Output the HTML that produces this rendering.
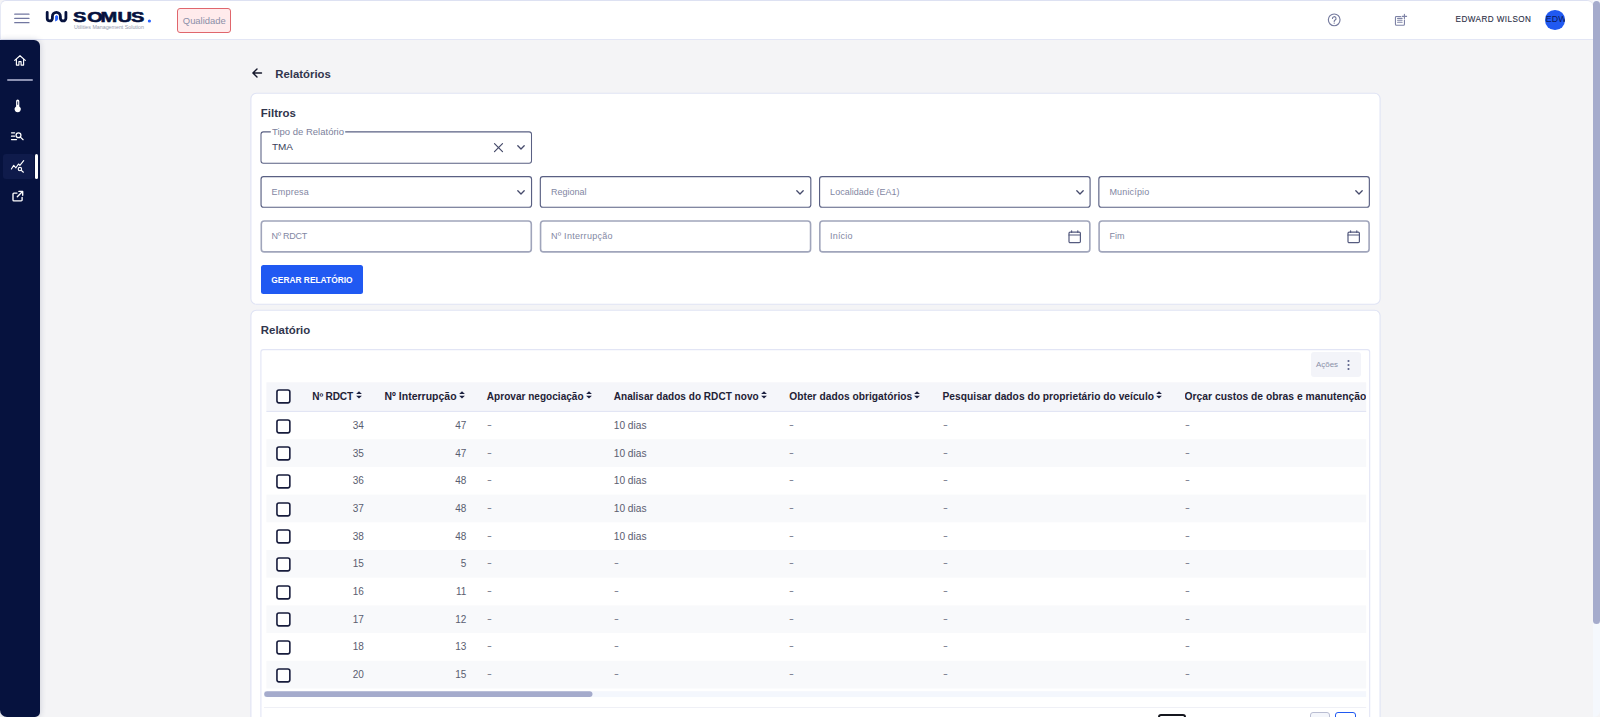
<!DOCTYPE html><html lang="pt-BR"><head><meta charset="utf-8"><title>Relatórios</title><style>
*{box-sizing:border-box}
html,body{margin:0;padding:0}
body{width:1600px;height:717px;overflow:hidden;background:#f4f4f6;font-family:"Liberation Sans",sans-serif;color:#2a2f4a;position:relative}
.abs{position:absolute}
.t{position:absolute;white-space:nowrap;line-height:1;transform:translateY(-50%)}
#hdr{position:absolute;left:0;top:0;width:1593px;height:40px;background:#fff;border-top:1px solid #dde1f2;border-bottom:1px solid #e3e6f5;border-left:1px solid #e6e9f5;border-radius:6px 6px 0 0}
#side{position:absolute;left:0;top:40px;width:40px;height:677px;background:#06123e;border-radius:0 6px 5px 7px;box-shadow:0 0 6px rgba(30,40,90,.2)}
#sbtrack{position:absolute;left:1593px;top:0;width:7px;height:717px;background:#f5f8fd;border-radius:0 4px 6px 0}
#sbthumb{position:absolute;left:1593.4px;top:1px;width:6.3px;height:623px;background:#a5abcc;border-radius:3.5px}
.card{position:absolute;background:#fff;border:1px solid #e1e5f5;border-radius:6px}
.fld{position:absolute;height:32px;background:#fff;border-radius:2.5px;border:1px solid #555b7f}
.fld.inp{border:2px solid #a6abc3;border-radius:3px}
.ph{color:#8287a3;font-size:9px;letter-spacing:.12px}
.hd{font-weight:700;font-size:10px;color:#1f2236;letter-spacing:.02px}
.cell{font-size:10px;color:#5a5d70}
.dash{transform:translateY(-50%) translateY(-.7px) scaleX(1.45);transform-origin:0 50%;color:#7b7e8f}
.cb{position:absolute;width:15px;height:15px;border:1.7px solid #171c3c;border-radius:2.5px;background:#fff}
.row{position:absolute;left:266px;width:1100.3px}
.row.alt{background:#f8f9fb}
svg{position:absolute;overflow:visible}
</style></head><body>
<div id="hdr"></div>
<svg style="left:13.5px;top:12px" width="16" height="14" viewBox="0 0 16 14"><g stroke="#7277a0" stroke-width="1.4" stroke-linecap="round"><line x1="0.8" y1="2.15" x2="14.9" y2="2.15"/><line x1="0.8" y1="6.4" x2="14.9" y2="6.4"/><line x1="0.8" y1="10.65" x2="14.9" y2="10.65"/></g></svg>
<svg style="left:40px;top:5px" width="120" height="30" viewBox="40 5 120 30">
<path d="M47.2 12.3V18.3a2.6 2.6 0 0 0 5.2 0V16.4a4 4 0 0 1 8 0V18.2a2.75 2.75 0 0 0 5.5 0V12.3" fill="none" stroke="#06123e" stroke-width="2.8" stroke-linecap="round" stroke-linejoin="round"/>
<path d="M55.1 21.5V16.3L56.5 14.9 58.1 16.2V19Q57.8 20.8 55.1 21.5z" fill="#2962ff"/>
<text transform="scale(1.37 1)" x="53.28 63.65 73.28 85.69 95.62" y="21.8" style="font-family:'Liberation Sans',sans-serif;font-weight:700;font-size:14.6px" fill="#06123e" stroke="#06123e" stroke-width=".55" stroke-linejoin="round">SOMUS</text>
<circle cx="149.4" cy="21" r="1.6" fill="#2962ff"/>
<text x="73.9" y="28.8" style="font-family:'Liberation Sans',sans-serif;font-size:4.5px" fill="#9498ae" textLength="70" lengthAdjust="spacingAndGlyphs">Utilities Management Solution</text>
</svg>
<div class="abs" style="left:177px;top:8px;width:54px;height:25px;border:1px solid #e0666c;border-radius:3px;background:#ffebec"></div>
<div class="t" style="left:182.8px;top:20.8px;font-size:9.43px;color:#8b8fa8">Qualidade</div>
<svg style="left:1327px;top:13px" width="14" height="14" viewBox="0 0 14 14"><circle cx="7.2" cy="6.85" r="5.85" fill="none" stroke="#757a9e" stroke-width="1.15"/><path d="M5.45 5.5a1.8 1.8 0 1 1 2.7 1.55c-.65.4-.95.75-.95 1.45" fill="none" stroke="#757a9e" stroke-width="1.15" stroke-linecap="round"/><circle cx="7.2" cy="10.1" r=".72" fill="#757a9e"/></svg>
<svg style="left:1394px;top:13px" width="14" height="14" viewBox="0 0 14 14"><g fill="none" stroke="#7e83a6" stroke-width="1.1" stroke-linecap="round" stroke-linejoin="round"><path d="M6.6 3.45H2.45a1 1 0 0 0-1 1V11.2a1 1 0 0 0 1 1H9.45a1 1 0 0 0 1-1V7"/><path d="M3.6 5.4h4.5M3.6 7.3h4.5M3.6 9.2h4.5"/><path d="M10.4 1.2v4.4M8.2 3.4h4.4"/></g></svg>
<div class="t" style="left:1455.6px;top:19.5px;font-size:8.15px;letter-spacing:.44px;color:#2a2e45;-webkit-text-stroke:.1px #2a2e45">EDWARD WILSON</div>
<div class="abs" style="left:1545px;top:10px;width:19.6px;height:19.6px;border-radius:50%;background:#2059f1;overflow:hidden"><div class="t" style="left:.7px;top:8.5px;font-size:8.8px;letter-spacing:.15px;color:#0a1a5c">EDW</div></div>
<div id="sbtrack"></div><div id="sbthumb"></div>
<div id="side"></div>
<svg style="left:13px;top:53px" width="14" height="14" viewBox="0 0 14 14"><path d="M1.7 7.4L7 2.7l5.3 4.7M3.4 6.3V12.1h2.5V8.6h2.2V12.1h2.5V6.3" fill="none" stroke="#fff" stroke-width="1.15" stroke-linejoin="round" stroke-linecap="round"/></svg>
<div class="abs" style="left:7.3px;top:79.3px;width:25.6px;height:1.3px;background:#8c92b2;border-radius:1px"></div>
<svg style="left:10.8px;top:98px" width="14" height="16" viewBox="0 0 14 16"><path d="M5.1 3.1a1.6 1.6 0 0 1 3.2 0V8.4a3.15 3.15 0 1 1-3.2 0z" fill="#fff"/><path d="M6.7 3.4v3.4" stroke="#06123e" stroke-width=".8"/></svg>
<svg style="left:10px;top:130px" width="15" height="12" viewBox="0 0 15 12"><g fill="none" stroke="#fff" stroke-width="1.25" stroke-linecap="round"><path d="M1.5 2.8h3.1M1.5 6.2h3.1M1.5 9.6h5"/><circle cx="8.5" cy="5.2" r="2.45"/><path d="M10.4 7.1l2.7 2.6"/></g></svg>
<div class="abs" style="left:3px;top:153.5px;width:31px;height:25px;background:#0f1b4b;border-radius:3px"></div>
<div class="abs" style="left:34.8px;top:153.5px;width:3.6px;height:25px;background:#fff;border-radius:2px"></div>
<svg style="left:10px;top:159px" width="15" height="14" viewBox="0 0 15 14"><g fill="none" stroke="#fff" stroke-width="1.15" stroke-linecap="round" stroke-linejoin="round"><path d="M1.4 10L3.7 6.4 5.9 8.8 8.5 5 9.9 6.3 13.7 1.7"/><circle cx="9.9" cy="10" r="1.7" fill="#0f1b4b"/><path d="M11.2 11.3l2.2 1.9"/></g></svg>
<svg style="left:11px;top:189px" width="14" height="14" viewBox="0 0 14 14"><g fill="none" stroke="#fff" stroke-width="1.35" stroke-linecap="round" stroke-linejoin="round"><path d="M6 4.1H2.9a.9.9 0 0 0-.9.9v5.9a.9.9 0 0 0 .9.9h7.3a.9.9 0 0 0 .9-.9V8.3"/><path d="M7.9 2.4h3.8v3.8M11.5 2.6L6.3 7.8"/></g></svg>
<svg style="left:251px;top:67px" width="13" height="12" viewBox="0 0 13 12"><path d="M10.5 6H2.2M6 1.9L1.9 6 6 10.1" fill="none" stroke="#14172b" stroke-width="1.4" stroke-linecap="round" stroke-linejoin="round"/></svg>
<div class="t" style="left:275.3px;top:74.7px;font-size:11.35px;font-weight:700;color:#31354d">Relatórios</div>
<svg style="left:0;top:0" width="1600" height="717" viewBox="0 0 1600 717"><rect x="250.9" y="93.2" width="1129.2" height="211.1" rx="5.5" fill="#fff" stroke="#dfe3f4" stroke-width="1.1"/></svg>
<div class="t" style="left:260.8px;top:113.6px;font-size:11.45px;font-weight:700;color:#31354d">Filtros</div>
<svg style="left:0;top:0" width="1600" height="717" viewBox="0 0 1600 717"><g fill="#fff"><rect x="261" y="131.85" width="270.5" height="31.3" rx="2.4" stroke="#5a6083" stroke-width="1.05"/><rect x="270.8" y="130" width="74.4" height="4"/><rect x="261.05" y="176.65" width="270.50" height="30.6" rx="2.5" stroke="#5a6083" stroke-width="1.15"/><rect x="540.32" y="176.65" width="270.50" height="30.6" rx="2.5" stroke="#5a6083" stroke-width="1.15"/><rect x="819.58" y="176.65" width="270.50" height="30.6" rx="2.5" stroke="#5a6083" stroke-width="1.15"/><rect x="1098.85" y="176.65" width="270.50" height="30.6" rx="2.5" stroke="#5a6083" stroke-width="1.15"/><rect x="261.30" y="221.05" width="270.00" height="30.85" rx="3" stroke="#a0a5bb" stroke-width="1.6"/><rect x="540.57" y="221.05" width="270.00" height="30.85" rx="3" stroke="#a0a5bb" stroke-width="1.6"/><rect x="819.83" y="221.05" width="270.00" height="30.85" rx="3" stroke="#a0a5bb" stroke-width="1.6"/><rect x="1099.10" y="221.05" width="270.00" height="30.85" rx="3" stroke="#a0a5bb" stroke-width="1.6"/></g></svg>
<div class="t" style="left:270.7px;top:132.4px;font-size:9.5px;color:#7c819c;padding:0 1.3px">Tipo de Relatório</div>
<div class="t" style="left:272px;top:147.2px;font-size:9.95px;color:#3a3f5c">TMA</div>
<svg style="left:493px;top:142.2px" width="11" height="11" viewBox="0 0 11 11"><path d="M1.5 1.6l8 8M9.5 1.6l-8 8" stroke="#454a69" stroke-width="1.2" stroke-linecap="round"/></svg>
<svg style="left:516.4px;top:144.2px" width="10" height="7" viewBox="0 0 10 7"><path d="M1.8 1.7L5 5 8.2 1.7" fill="none" stroke="#454a6b" stroke-width="1.3" stroke-linecap="round" stroke-linejoin="round"/></svg>
<div class="t ph" style="left:271.6px;top:192px;letter-spacing:0.200px">Empresa</div>
<svg style="left:516.1px;top:188.7px" width="10" height="7" viewBox="0 0 10 7"><path d="M1.8 1.7L5 5 8.2 1.7" fill="none" stroke="#454a6b" stroke-width="1.3" stroke-linecap="round" stroke-linejoin="round"/></svg>
<div class="t ph" style="left:550.9px;top:192px;letter-spacing:0.000px">Regional</div>
<svg style="left:795.4px;top:188.7px" width="10" height="7" viewBox="0 0 10 7"><path d="M1.8 1.7L5 5 8.2 1.7" fill="none" stroke="#454a6b" stroke-width="1.3" stroke-linecap="round" stroke-linejoin="round"/></svg>
<div class="t ph" style="left:830.1px;top:192px;letter-spacing:0.030px">Localidade (EA1)</div>
<svg style="left:1074.6px;top:188.7px" width="10" height="7" viewBox="0 0 10 7"><path d="M1.8 1.7L5 5 8.2 1.7" fill="none" stroke="#454a6b" stroke-width="1.3" stroke-linecap="round" stroke-linejoin="round"/></svg>
<div class="t ph" style="left:1109.4px;top:192px;letter-spacing:0.165px">Município</div>
<svg style="left:1353.9px;top:188.7px" width="10" height="7" viewBox="0 0 10 7"><path d="M1.8 1.7L5 5 8.2 1.7" fill="none" stroke="#454a6b" stroke-width="1.3" stroke-linecap="round" stroke-linejoin="round"/></svg>
<div class="t ph" style="left:271.6px;top:235.9px;letter-spacing:-0.270px">Nº RDCT</div>
<div class="t ph" style="left:550.9px;top:235.9px;letter-spacing:0.300px">Nº Interrupção</div>
<div class="t ph" style="left:830.1px;top:235.9px;letter-spacing:0.165px">Início</div>
<svg style="left:1067.6px;top:229.8px" width="14" height="15" viewBox="0 0 14 15"><g fill="none" stroke="#555b7f" stroke-width="1.2" stroke-linejoin="round" stroke-linecap="round"><rect x="1" y="2.1" width="11.4" height="10.6" rx="1.2"/><path d="M1 5h11.4M3.6 .8v1.6M9.8 .8v1.6"/></g></svg>
<div class="t ph" style="left:1109.4px;top:235.9px;letter-spacing:0.035px">Fim</div>
<svg style="left:1346.9px;top:229.8px" width="14" height="15" viewBox="0 0 14 15"><g fill="none" stroke="#555b7f" stroke-width="1.2" stroke-linejoin="round" stroke-linecap="round"><rect x="1" y="2.1" width="11.4" height="10.6" rx="1.2"/><path d="M1 5h11.4M3.6 .8v1.6M9.8 .8v1.6"/></g></svg>
<div class="abs" style="left:261px;top:265px;width:102.4px;height:29px;background:#2059f2;border-radius:2.5px"></div>
<div class="t" style="left:271.3px;top:279.9px;font-size:8.38px;font-weight:700;color:#fff">GERAR RELATÓRIO</div>
<svg style="left:0;top:0" width="1600" height="717" viewBox="0 0 1600 717"><rect x="250.9" y="310.2" width="1129.2" height="420" rx="5.5" fill="#fff" stroke="#dfe3f4" stroke-width="1.1"/></svg>
<div class="t" style="left:260.8px;top:330.9px;font-size:11.42px;font-weight:700;color:#31354d">Relatório</div>
<svg style="left:0;top:0" width="1600" height="717" viewBox="0 0 1600 717"><rect x="260.9" y="349.6" width="1108.8" height="400" rx="2.5" fill="#fff" stroke="#e2e5f5" stroke-width="1.1"/></svg>
<div class="abs" style="left:1310.7px;top:352px;width:50px;height:25px;background:#f3f4f9;border-radius:3px"></div>
<div class="t" style="left:1316px;top:365.3px;font-size:7.95px;color:#8a8fa8">Ações</div>
<svg style="left:1346px;top:359px" width="5" height="12" viewBox="0 0 5 12"><g fill="#5a6088"><circle cx="2.5" cy="2" r="1.05"/><circle cx="2.5" cy="6" r="1.05"/><circle cx="2.5" cy="10" r="1.05"/></g></svg>
<svg style="left:0;top:0" width="1600" height="717" viewBox="0 0 1600 717"><rect x="266.4" y="382.3" width="1099.8" height="29.4" fill="#f5f6fa" transform="scale(1 1)"/><rect x="266.4" y="410.9" width="1099.8" height="1" fill="#dfe3f3"/><rect x="266.4" y="439.20" width="1099.8" height="27.70" fill="#f8f9fb"/><rect x="266.4" y="494.60" width="1099.8" height="27.70" fill="#f8f9fb"/><rect x="266.4" y="550.00" width="1099.8" height="27.70" fill="#f8f9fb"/><rect x="266.4" y="605.40" width="1099.8" height="27.70" fill="#f8f9fb"/><rect x="266.4" y="660.80" width="1099.8" height="27.70" fill="#f8f9fb"/><rect x="264" y="691.2" width="1102.2" height="5.9" fill="#f4f7fd"/><rect x="264.2" y="691.2" width="328.3" height="5.8" rx="2.9" fill="#a5abcc"/><rect x="264" y="707" width="1102.2" height="1" fill="#eff0f6"/></svg>
<svg style="left:276.30px;top:389.30px" width="15" height="15" viewBox="0 0 15 15"><rect x=".95" y=".95" width="12.9" height="12.9" rx="2" fill="#fff" stroke="#171c3c" stroke-width="1.6"/></svg>
<div class="t hd" style="left:312.30px;top:397.4px;font-size:10.10px;letter-spacing:-.17px">Nº RDCT</div>
<svg style="left:356.0px;top:391.4px" width="6" height="8" viewBox="0 0 6 8"><path d="M3 .2L5.9 3.1H.1zM3 7.6L.1 4.7h5.8z" fill="#1c2140"/></svg>
<div class="t hd" style="left:384.50px;top:397.4px;font-size:10.46px">Nº Interrupção</div>
<svg style="left:459.0px;top:391.4px" width="6" height="8" viewBox="0 0 6 8"><path d="M3 .2L5.9 3.1H.1zM3 7.6L.1 4.7h5.8z" fill="#1c2140"/></svg>
<div class="t hd" style="left:486.80px;top:397.4px;font-size:10.04px">Aprovar negociação</div>
<svg style="left:586.0px;top:391.4px" width="6" height="8" viewBox="0 0 6 8"><path d="M3 .2L5.9 3.1H.1zM3 7.6L.1 4.7h5.8z" fill="#1c2140"/></svg>
<div class="t hd" style="left:613.75px;top:397.4px;font-size:10.04px">Analisar dados do RDCT novo</div>
<svg style="left:760.6px;top:391.4px" width="6" height="8" viewBox="0 0 6 8"><path d="M3 .2L5.9 3.1H.1zM3 7.6L.1 4.7h5.8z" fill="#1c2140"/></svg>
<div class="t hd" style="left:789.30px;top:397.4px;font-size:10.21px">Obter dados obrigatórios</div>
<svg style="left:914.2px;top:391.4px" width="6" height="8" viewBox="0 0 6 8"><path d="M3 .2L5.9 3.1H.1zM3 7.6L.1 4.7h5.8z" fill="#1c2140"/></svg>
<div class="t hd" style="left:942.50px;top:397.4px;font-size:10.22px">Pesquisar dados do proprietário do veículo</div>
<svg style="left:1156.2px;top:391.4px" width="6" height="8" viewBox="0 0 6 8"><path d="M3 .2L5.9 3.1H.1zM3 7.6L.1 4.7h5.8z" fill="#1c2140"/></svg>
<div class="t hd" style="left:1184.5px;top:397.4px;width:181.7px;overflow:hidden;font-size:10.29px">Orçar custos de obras e manutenção civil</div>
<svg style="left:276.30px;top:418.55px" width="15" height="15" viewBox="0 0 15 15"><rect x=".95" y=".95" width="12.9" height="12.9" rx="2" fill="#fff" stroke="#171c3c" stroke-width="1.6"/></svg>
<div class="t cell" style="left:313px;width:50.9px;text-align:right;top:425.85px">34</div>
<div class="t cell" style="left:400px;width:66.4px;text-align:right;top:425.85px">47</div>
<div class="t cell dash" style="left:486.8px;top:425.85px">-</div>
<div class="t cell dash" style="left:789.3px;top:425.85px">-</div>
<div class="t cell dash" style="left:942.5px;top:425.85px">-</div>
<div class="t cell dash" style="left:1184.5px;top:425.85px">-</div>
<div class="t cell" style="left:613.75px;top:425.85px;font-size:10.16px">10 dias</div>
<svg style="left:276.30px;top:446.25px" width="15" height="15" viewBox="0 0 15 15"><rect x=".95" y=".95" width="12.9" height="12.9" rx="2" fill="#fff" stroke="#171c3c" stroke-width="1.6"/></svg>
<div class="t cell" style="left:313px;width:50.9px;text-align:right;top:453.55px">35</div>
<div class="t cell" style="left:400px;width:66.4px;text-align:right;top:453.55px">47</div>
<div class="t cell dash" style="left:486.8px;top:453.55px">-</div>
<div class="t cell dash" style="left:789.3px;top:453.55px">-</div>
<div class="t cell dash" style="left:942.5px;top:453.55px">-</div>
<div class="t cell dash" style="left:1184.5px;top:453.55px">-</div>
<div class="t cell" style="left:613.75px;top:453.55px;font-size:10.16px">10 dias</div>
<svg style="left:276.30px;top:473.95px" width="15" height="15" viewBox="0 0 15 15"><rect x=".95" y=".95" width="12.9" height="12.9" rx="2" fill="#fff" stroke="#171c3c" stroke-width="1.6"/></svg>
<div class="t cell" style="left:313px;width:50.9px;text-align:right;top:481.25px">36</div>
<div class="t cell" style="left:400px;width:66.4px;text-align:right;top:481.25px">48</div>
<div class="t cell dash" style="left:486.8px;top:481.25px">-</div>
<div class="t cell dash" style="left:789.3px;top:481.25px">-</div>
<div class="t cell dash" style="left:942.5px;top:481.25px">-</div>
<div class="t cell dash" style="left:1184.5px;top:481.25px">-</div>
<div class="t cell" style="left:613.75px;top:481.25px;font-size:10.16px">10 dias</div>
<svg style="left:276.30px;top:501.65px" width="15" height="15" viewBox="0 0 15 15"><rect x=".95" y=".95" width="12.9" height="12.9" rx="2" fill="#fff" stroke="#171c3c" stroke-width="1.6"/></svg>
<div class="t cell" style="left:313px;width:50.9px;text-align:right;top:508.95px">37</div>
<div class="t cell" style="left:400px;width:66.4px;text-align:right;top:508.95px">48</div>
<div class="t cell dash" style="left:486.8px;top:508.95px">-</div>
<div class="t cell dash" style="left:789.3px;top:508.95px">-</div>
<div class="t cell dash" style="left:942.5px;top:508.95px">-</div>
<div class="t cell dash" style="left:1184.5px;top:508.95px">-</div>
<div class="t cell" style="left:613.75px;top:508.95px;font-size:10.16px">10 dias</div>
<svg style="left:276.30px;top:529.35px" width="15" height="15" viewBox="0 0 15 15"><rect x=".95" y=".95" width="12.9" height="12.9" rx="2" fill="#fff" stroke="#171c3c" stroke-width="1.6"/></svg>
<div class="t cell" style="left:313px;width:50.9px;text-align:right;top:536.65px">38</div>
<div class="t cell" style="left:400px;width:66.4px;text-align:right;top:536.65px">48</div>
<div class="t cell dash" style="left:486.8px;top:536.65px">-</div>
<div class="t cell dash" style="left:789.3px;top:536.65px">-</div>
<div class="t cell dash" style="left:942.5px;top:536.65px">-</div>
<div class="t cell dash" style="left:1184.5px;top:536.65px">-</div>
<div class="t cell" style="left:613.75px;top:536.65px;font-size:10.16px">10 dias</div>
<svg style="left:276.30px;top:557.05px" width="15" height="15" viewBox="0 0 15 15"><rect x=".95" y=".95" width="12.9" height="12.9" rx="2" fill="#fff" stroke="#171c3c" stroke-width="1.6"/></svg>
<div class="t cell" style="left:313px;width:50.9px;text-align:right;top:564.35px">15</div>
<div class="t cell" style="left:400px;width:66.4px;text-align:right;top:564.35px">5</div>
<div class="t cell dash" style="left:486.8px;top:564.35px">-</div>
<div class="t cell dash" style="left:789.3px;top:564.35px">-</div>
<div class="t cell dash" style="left:942.5px;top:564.35px">-</div>
<div class="t cell dash" style="left:1184.5px;top:564.35px">-</div>
<div class="t cell dash" style="left:613.75px;top:564.35px">-</div>
<svg style="left:276.30px;top:584.75px" width="15" height="15" viewBox="0 0 15 15"><rect x=".95" y=".95" width="12.9" height="12.9" rx="2" fill="#fff" stroke="#171c3c" stroke-width="1.6"/></svg>
<div class="t cell" style="left:313px;width:50.9px;text-align:right;top:592.05px">16</div>
<div class="t cell" style="left:400px;width:66.4px;text-align:right;top:592.05px">11</div>
<div class="t cell dash" style="left:486.8px;top:592.05px">-</div>
<div class="t cell dash" style="left:789.3px;top:592.05px">-</div>
<div class="t cell dash" style="left:942.5px;top:592.05px">-</div>
<div class="t cell dash" style="left:1184.5px;top:592.05px">-</div>
<div class="t cell dash" style="left:613.75px;top:592.05px">-</div>
<svg style="left:276.30px;top:612.45px" width="15" height="15" viewBox="0 0 15 15"><rect x=".95" y=".95" width="12.9" height="12.9" rx="2" fill="#fff" stroke="#171c3c" stroke-width="1.6"/></svg>
<div class="t cell" style="left:313px;width:50.9px;text-align:right;top:619.75px">17</div>
<div class="t cell" style="left:400px;width:66.4px;text-align:right;top:619.75px">12</div>
<div class="t cell dash" style="left:486.8px;top:619.75px">-</div>
<div class="t cell dash" style="left:789.3px;top:619.75px">-</div>
<div class="t cell dash" style="left:942.5px;top:619.75px">-</div>
<div class="t cell dash" style="left:1184.5px;top:619.75px">-</div>
<div class="t cell dash" style="left:613.75px;top:619.75px">-</div>
<svg style="left:276.30px;top:640.15px" width="15" height="15" viewBox="0 0 15 15"><rect x=".95" y=".95" width="12.9" height="12.9" rx="2" fill="#fff" stroke="#171c3c" stroke-width="1.6"/></svg>
<div class="t cell" style="left:313px;width:50.9px;text-align:right;top:647.45px">18</div>
<div class="t cell" style="left:400px;width:66.4px;text-align:right;top:647.45px">13</div>
<div class="t cell dash" style="left:486.8px;top:647.45px">-</div>
<div class="t cell dash" style="left:789.3px;top:647.45px">-</div>
<div class="t cell dash" style="left:942.5px;top:647.45px">-</div>
<div class="t cell dash" style="left:1184.5px;top:647.45px">-</div>
<div class="t cell dash" style="left:613.75px;top:647.45px">-</div>
<svg style="left:276.30px;top:667.85px" width="15" height="15" viewBox="0 0 15 15"><rect x=".95" y=".95" width="12.9" height="12.9" rx="2" fill="#fff" stroke="#171c3c" stroke-width="1.6"/></svg>
<div class="t cell" style="left:313px;width:50.9px;text-align:right;top:675.15px">20</div>
<div class="t cell" style="left:400px;width:66.4px;text-align:right;top:675.15px">15</div>
<div class="t cell dash" style="left:486.8px;top:675.15px">-</div>
<div class="t cell dash" style="left:789.3px;top:675.15px">-</div>
<div class="t cell dash" style="left:942.5px;top:675.15px">-</div>
<div class="t cell dash" style="left:1184.5px;top:675.15px">-</div>
<div class="t cell dash" style="left:613.75px;top:675.15px">-</div>
<div class="abs" style="left:1157.5px;top:714.4px;width:28.5px;height:24px;border:2px solid #15171f;border-radius:3px;background:#fff"></div>
<div class="abs" style="left:1310px;top:712.3px;width:20px;height:24px;border:1px solid #b9bdd2;border-radius:3px;background:#f4f6fb"></div>
<div class="abs" style="left:1335.3px;top:712.3px;width:20.5px;height:24px;border:1px solid #2059f1;border-radius:3px;background:#fff"></div>
</body></html>
